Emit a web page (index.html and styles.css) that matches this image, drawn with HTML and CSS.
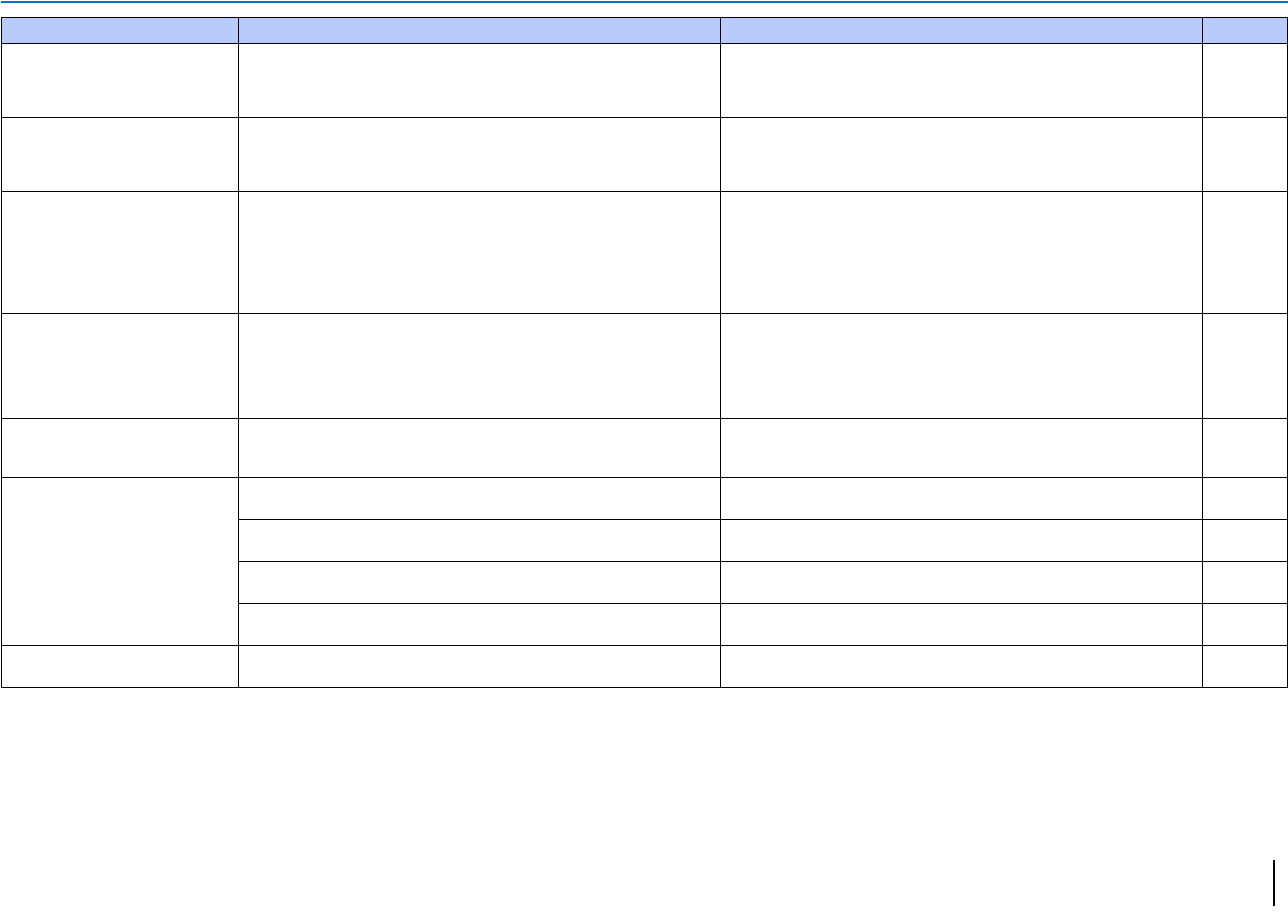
FILE: index.html
```html
<!DOCTYPE html>
<html lang="en">
<head>
<meta charset="utf-8">
<title>Table</title>
<link rel="stylesheet" href="styles.css">
</head>
<body>
<div class="page">
  <div class="rule"></div>
  <div class="grid">
    <div class="cell head"></div>
    <div class="cell head"></div>
    <div class="cell head"></div>
    <div class="cell head"></div>

    <div class="cell r74"></div><div class="cell r74"></div><div class="cell r74"></div><div class="cell r74"></div>
    <div class="cell r74"></div><div class="cell r74"></div><div class="cell r74"></div><div class="cell r74"></div>
    <div class="cell"></div><div class="cell"></div><div class="cell"></div><div class="cell"></div>
    <div class="cell"></div><div class="cell"></div><div class="cell"></div><div class="cell"></div>
    <div class="cell"></div><div class="cell"></div><div class="cell"></div><div class="cell"></div>

    <div class="cell span4"></div><div class="cell"></div><div class="cell"></div><div class="cell"></div>
    <div class="cell"></div><div class="cell"></div><div class="cell"></div>
    <div class="cell"></div><div class="cell"></div><div class="cell"></div>
    <div class="cell"></div><div class="cell"></div><div class="cell"></div>

    <div class="cell"></div><div class="cell"></div><div class="cell"></div><div class="cell"></div>
  </div>
  <div class="footer"><div class="marker"></div></div>
</div>
</body>
</html>
```

FILE: styles.css
```css
html, body {
  margin: 0;
  padding: 0;
  background: #ffffff;
  font-family: "Liberation Sans", Arial, sans-serif;
}

.page {
  display: flex;
  flex-direction: column;
  height: 917px;
  overflow: hidden;
}

.rule {
  height: 2px;
  margin: 1px 0 0 1px;
  background: #0074c6;
}

.grid {
  display: grid;
  grid-template-columns: 237px 482px 482px 85px;
  grid-template-rows: 26px 74px 74px 122px 105px 59px 42px 42px 42px 42px 42px;
  margin: 14px 0 0 1px;
  width: max-content;
  border-left: 1px solid #000;
  border-top: 1px solid #000;
}

.cell {
  box-sizing: border-box;
  border-right: 1px solid #000;
  border-bottom: 1px solid #000;
}

.head {
  background: #b8cbfb;
}

.span4 {
  grid-row: span 4;
}

.footer {
  margin-top: auto;
  display: flex;
  justify-content: flex-end;
  padding: 0 13px 11px 0;
}

.marker {
  width: 2px;
  height: 46px;
  background: #000;
}
```
